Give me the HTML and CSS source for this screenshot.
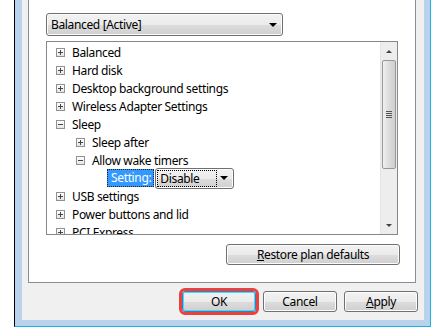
FILE: index.html
```html
<!DOCTYPE html>
<html lang="en">
<head>
    <meta charset="UTF-8">
    <title>Power Options - Advanced settings</title>
    <link rel="stylesheet" href="styles.css">
</head>
<body>
    <div class="frame">
        <div class="client">
            <div class="panel">
                <div class="combo plan-combo">
                    <span>Balanced [Active]</span>
                    <span class="arrow"></span>
                </div>

                <div class="tree">
                    <div class="tree-items">
                        <div class="row"><span class="node plus"></span>Balanced</div>
                        <div class="row"><span class="node plus"></span>Hard disk</div>
                        <div class="row"><span class="node plus"></span>Desktop background settings</div>
                        <div class="row"><span class="node plus"></span>Wireless Adapter Settings</div>
                        <div class="row"><span class="node minus"></span>Sleep</div>
                        <div class="row level2"><span class="node plus"></span>Sleep after</div>
                        <div class="row level2"><span class="node minus"></span>Allow wake timers</div>
                        <div class="row setting-row">
                            <span class="setting-label">Setting:</span>
                            <div class="combo value-combo">
                                <span class="focus">Disable</span>
                                <span class="arrow"></span>
                            </div>
                        </div>
                        <div class="row"><span class="node plus"></span>USB settings</div>
                        <div class="row"><span class="node plus"></span>Power buttons and lid</div>
                        <div class="row"><span class="node plus"></span>PCI Express</div>
                    </div>
                    <div class="scrollbar">
                        <div class="sb-btn"><span class="sb-up"></span></div>
                        <div class="sb-thumb"><span class="grip"></span></div>
                        <div class="sb-track"></div>
                        <div class="sb-btn"><span class="sb-down"></span></div>
                    </div>
                </div>

                <div class="restore-line">
                    <button class="btn restore"><u>R</u>estore plan defaults</button>
                </div>
            </div>

            <div class="actions">
                <button class="btn default">OK</button>
                <button class="btn">Cancel</button>
                <button class="btn"><u>A</u>pply</button>
            </div>
        </div>
    </div>
</body>
</html>
```

FILE: styles.css
```css
body {
    margin: 0;
    background-color: #fff;
    font-family: "Noto Sans", "Open Sans", sans-serif;
    font-size: 12px;
    letter-spacing: -0.35px;
    color: #000;
}

.frame {
    margin-left: 14px;
    width: 402px;
    height: 320px;
    padding: 0 6px 6px 7px;
    background-color: #bad3ec;
    border-left: 1px solid #000;
    border-right: 1px solid #1ab2e6;
    border-bottom: 1px solid #1ab2e6;
}

.client {
    height: 320px;
    background-color: #f0f0f0;
    display: flex;
    flex-direction: column;
}

.panel {
    margin: 0 8px 0 6px;
    background-color: #fff;
    border: 1px solid #898c95;
    border-top: none;
    padding: 13px 15px 0 17px;
    box-sizing: border-box;
    height: 283px;
}

.combo {
    display: flex;
    align-items: center;
    justify-content: space-between;
    box-sizing: border-box;
    border: 1px solid #707070;
    border-radius: 3px;
    background: linear-gradient(#f2f2f2 0%, #ebebeb 50%, #dddddd 51%, #cfcfcf 100%);
    box-shadow: inset 0 0 0 1px #fcfcfc;
}

.plan-combo {
    width: 237px;
    height: 23px;
    padding: 0 5px 0 4px;
}

.arrow {
    width: 0;
    height: 0;
    border-left: 4px solid transparent;
    border-right: 4px solid transparent;
    border-top: 4px solid #000;
}

.tree {
    margin-top: 5px;
    width: 352px;
    height: 194px;
    box-sizing: border-box;
    border: 1px solid #828790;
    display: flex;
    overflow: hidden;
}

.tree-items {
    flex: 1;
    padding-top: 1px;
}

.row {
    height: 18px;
    display: flex;
    align-items: center;
    padding-left: 9px;
    white-space: nowrap;
}

.row.level2 {
    padding-left: 29px;
}

.node {
    width: 9px;
    height: 9px;
    box-sizing: border-box;
    border: 1px solid #919191;
    background: linear-gradient(#fff, #e6e6e6);
    margin-right: 7px;
    position: relative;
}

.node::before,
.node.plus::after {
    content: "";
    position: absolute;
    background-color: #444;
}

.node::before {
    left: 1px;
    top: 3px;
    width: 5px;
    height: 1px;
}

.node.plus::after {
    left: 3px;
    top: 1px;
    width: 1px;
    height: 5px;
}

.setting-row {
    padding-left: 60px;
    height: 18px;
}

.setting-label {
    background-color: #3399ff;
    color: #fff;
    height: 18px;
    line-height: 18px;
    padding: 0 3px 0 4px;
    outline: 1px dotted #222;
    outline-offset: -1px;
}

.value-combo {
    width: 79px;
    height: 21px;
    margin-left: 1px;
    padding: 0 5px 0 2px;
}

.value-combo .focus {
    width: 56px;
    line-height: 15px;
    outline: 1px dotted #000;
    padding-left: 2px;
}

.scrollbar {
    width: 17px;
    background-color: #ededed;
    border-left: 1px solid #e4e4e4;
    box-sizing: border-box;
    display: flex;
    flex-direction: column;
    align-items: center;
}

.sb-btn {
    height: 18px;
    width: 100%;
    display: flex;
    align-items: center;
    justify-content: center;
}

.sb-up,
.sb-down {
    width: 0;
    height: 0;
    border-left: 3px solid transparent;
    border-right: 3px solid transparent;
}

.sb-up {
    border-bottom: 3px solid #444;
}

.sb-down {
    border-top: 3px solid #444;
}

.sb-thumb {
    width: 14px;
    height: 109px;
    box-sizing: border-box;
    border: 1px solid #989898;
    border-radius: 2px;
    background: linear-gradient(90deg, #f1f1f1, #dcdcdc 50%, #cfcfcf);
    display: flex;
    align-items: center;
    justify-content: center;
}

.grip {
    width: 6px;
    height: 7px;
    background: repeating-linear-gradient(#555 0, #555 1px, transparent 1px, transparent 2px);
}

.sb-track {
    flex: 1;
}

.restore-line {
    display: flex;
    justify-content: flex-end;
    margin-top: 9px;
}

.btn {
    font-family: inherit;
    font-size: 12px;
    letter-spacing: inherit;
    color: #000;
    height: 21px;
    padding: 0;
    border: 1px solid #707070;
    border-radius: 3px;
    background: linear-gradient(#f2f2f2 0%, #ebebeb 50%, #dddddd 51%, #cfcfcf 100%);
    box-shadow: inset 0 0 0 1px #fcfcfc;
}

.restore {
    width: 174px;
}

.actions {
    display: flex;
    justify-content: flex-end;
    gap: 7px;
    margin-top: 8px;
    padding-right: 6px;
}

.actions .btn {
    width: 74px;
}

.btn.default {
    border-color: #3c7fb1;
    box-shadow: inset 0 0 0 1px #48d8fb;
    outline: 3px solid #e8413f;
}
```
